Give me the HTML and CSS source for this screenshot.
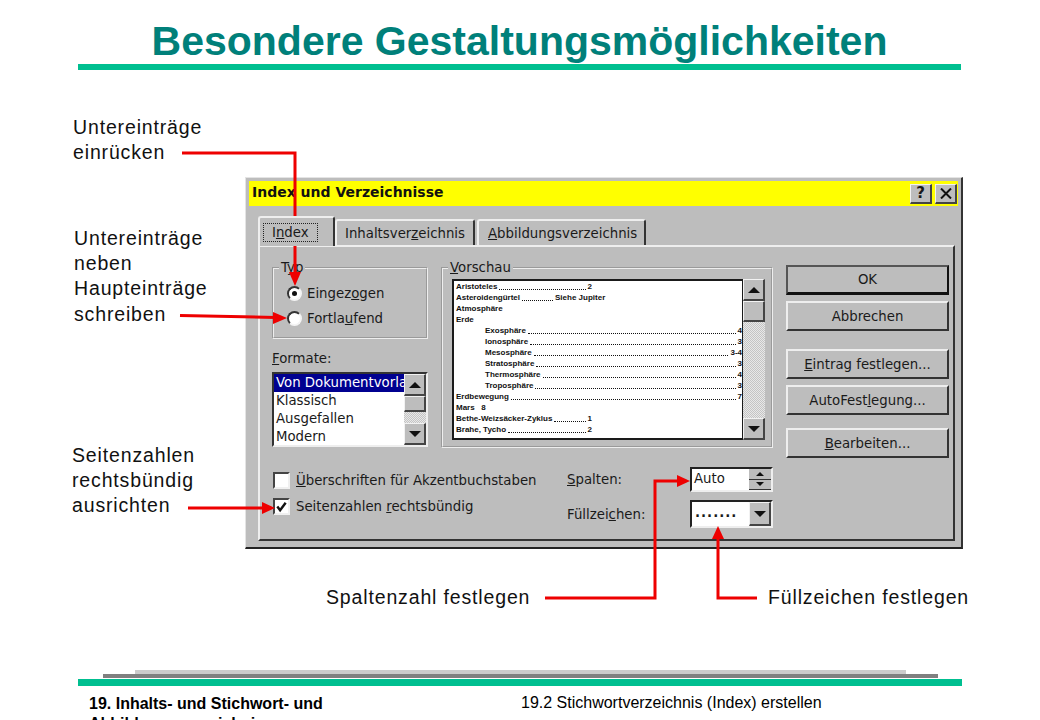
FILE: index.html
```html
<!DOCTYPE html>
<html>

<head>
    <title>Besondere Gestaltungsmöglichkeiten</title>

    <link rel="stylesheet" href="styles.css">
</head>

<body>
    <div class="slide">
        <h1 class="slide-title">Besondere Gestaltungsmöglichkeiten</h1>

        <div class="stage">
            <p class="note note-indent">Untereinträge<br>einrücken</p>
            <p class="note note-beside">Untereinträge<br>neben<br>Haupteinträge<br>schreiben</p>
            <p class="note note-right">Seitenzahlen<br>rechtsbündig<br>ausrichten</p>
            <p class="note note-cols">Spaltenzahl festlegen</p>
            <p class="note note-fill">Füllzeichen festlegen</p>

            <div class="dialog">
                <div class="titlebar">
                    <span class="titlebar-text">Index und Verzeichnisse</span>
                    <span class="title-btn">?</span>
                    <span class="title-btn title-close">
                        <svg width="12" height="11" viewBox="0 0 12 11"><path d="M1 0.5 L11 10.5 M11 0.5 L1 10.5" stroke="#111" stroke-width="2"/></svg>
                    </span>
                </div>

                <div class="tabs">
                    <div class="tab tab-active"><span class="focus">I<u>n</u>dex</span></div>
                    <div class="tab tab-second"><span>Inhaltsver<u>z</u>eichnis</span></div>
                    <div class="tab tab-last"><span><u>A</u>bbildungsverzeichnis</span></div>
                </div>

                <div class="panel">
                    <div class="left-col">
                        <fieldset class="group group-type">
                            <legend>T<u>y</u>p</legend>
                            <div class="radio-row"><span class="radio radio-on"></span><span>Eingez<u>o</u>gen</span></div>
                            <div class="radio-row"><span class="radio"></span><span>Fortla<u>u</u>fend</span></div>
                        </fieldset>
                        <div class="formats-label"><u>F</u>ormate:</div>
                        <div class="formats">
                            <div class="formats-items">
                                <div class="format-item format-selected">Von Dokumentvorla</div>
                                <div class="format-item">Klassisch</div>
                                <div class="format-item">Ausgefallen</div>
                                <div class="format-item">Modern</div>
                            </div>
                            <div class="scrollbar">
                                <span class="scroll-btn"><i class="tri-up"></i></span>
                                <span class="scroll-thumb scroll-thumb-small"></span>
                                <span class="scroll-track"></span>
                                <span class="scroll-btn"><i class="tri-down"></i></span>
                            </div>
                        </div>
                    </div>

                    <fieldset class="group group-preview">
                        <legend><u>V</u>orschau</legend>
                        <div class="preview">
                            <div class="preview-page">
                                <div class="entry"><span>Aristoteles</span><i></i><span>2</span><b class="entry-end"></b></div>
                                <div class="entry"><span>Asteroidengürtel</span><i class="short"></i><span>Siehe Jupiter</span><b class="entry-end"></b></div>
                                <div class="entry"><span>Atmosphäre</span></div>
                                <div class="entry"><span>Erde</span></div>
                                <div class="entry sub"><span>Exosphäre</span><i></i><span>4</span></div>
                                <div class="entry sub"><span>Ionosphäre</span><i></i><span>3</span></div>
                                <div class="entry sub"><span>Mesosphäre</span><i></i><span>3-4</span></div>
                                <div class="entry sub"><span>Stratosphäre</span><i></i><span>3</span></div>
                                <div class="entry sub"><span>Thermosphäre</span><i></i><span>4</span></div>
                                <div class="entry sub"><span>Troposphäre</span><i></i><span>3</span></div>
                                <div class="entry"><span>Erdbewegung</span><i></i><span>7</span></div>
                                <div class="entry"><span>Mars &nbsp; 8</span></div>
                                <div class="entry"><span>Bethe-Weizsäcker-Zyklus</span><i></i><span>1</span><b class="entry-end"></b></div>
                                <div class="entry"><span>Brahe, Tycho</span><i></i><span>2</span><b class="entry-end"></b></div>
                                <div class="entry"><span>Chinesische Sternbilder</span><i></i><span>4</span><b class="entry-end"></b></div>
                            </div>
                            <div class="scrollbar">
                                <span class="scroll-btn"><i class="tri-up"></i></span>
                                <span class="scroll-thumb"></span>
                                <span class="scroll-track"></span>
                                <span class="scroll-btn"><i class="tri-down"></i></span>
                            </div>
                        </div>
                    </fieldset>

                    <div class="buttons">
                        <div class="btn btn-default"><span>OK</span></div>
                        <div class="btn"><span>Abbrechen</span></div>
                        <div class="btn btn-gap"><span><u>E</u>intrag festlegen...</span></div>
                        <div class="btn"><span>AutoFest<u>l</u>egung...</span></div>
                        <div class="btn btn-gap-small"><span><u>B</u>earbeiten...</span></div>
                    </div>

                    <div class="options">
                        <div class="checks">
                            <div class="check-row"><span class="check"></span><span class="check-text"><u>Ü</u>berschriften für Akzentbuchstaben</span></div>
                            <div class="check-row">
                                <span class="check">
                                    <svg width="14" height="14" viewBox="0 0 14 14"><path d="M2.5 6.5 L5.5 10.5 L11.5 2.5" fill="none" stroke="#111" stroke-width="2.6"/></svg>
                                </span>
                                <span class="check-text">Seitenzahlen <u>r</u>echtsbündig</span>
                            </div>
                        </div>
                        <div class="fields">
                            <div class="field-row">
                                <span class="field-label"><u>S</u>palten:</span>
                                <div class="spin">
                                    <span class="spin-value">Auto</span>
                                    <span class="spin-btns">
                                        <span class="spin-btn"><i class="tri-up tri-small"></i></span>
                                        <span class="spin-btn"><i class="tri-down tri-small"></i></span>
                                    </span>
                                </div>
                            </div>
                            <div class="field-row">
                                <span class="field-label">Füllzei<u>c</u>hen:</span>
                                <div class="combo">
                                    <span class="combo-value">.......</span>
                                    <span class="combo-btn"><i class="tri-down"></i></span>
                                </div>
                            </div>
                        </div>
                    </div>
                </div>
            </div>
        </div>

        <div class="slide-footer">
            <div class="rule-light"></div>
            <div class="rule-dark"></div>
            <div class="rule-teal"></div>
            <div class="footer-text">
                <div class="chapter">19. Inhalts- und Stichwort- und<br>Abbildungsverzeichnis</div>
                <div class="section">19.2 Stichwortverzeichnis (Index) erstellen</div>
            </div>
        </div>

        <!-- red callout arrows -->
        <svg class="arrows" width="1040" height="720" viewBox="0 0 1040 720">
            <g fill="none" stroke="#ee0000" stroke-width="3">
                <path d="M182 153 H295 V274"/>
                <path d="M180 315.5 L276 317.5"/>
                <path d="M188 508 H265"/>
                <path d="M545 598 H655 V481 H680"/>
                <path d="M757 598 H718 V536"/>
            </g>
            <g fill="#ee0000">
                <path d="M295 286 L289 272 H301 Z"/>
                <path d="M287 318 L273 312 V324 Z"/>
                <path d="M275 508 L262 502 V514 Z"/>
                <path d="M690 481 L677 475 V487 Z"/>
                <path d="M718 526 L712 539 H724 Z"/>
            </g>
        </svg>
    </div>
</body>

</html>
```

FILE: styles.css
```css
* {
    box-sizing: border-box;
}

body {
    margin: 0;
    background-color: #ffffff;
    color: #000000;
    font-family: "Liberation Sans", Arial, sans-serif;
}

.slide {
    position: relative;
    display: flex;
    flex-direction: column;
    width: 1040px;
    height: 720px;
    overflow: hidden;
}

.slide-title {
    height: 70px;
    margin: 0 79px 0 78px;
    padding-top: 18px;
    border-bottom: 6px solid #00bf90;
    color: #00807a;
    font-size: 41px;
    line-height: 46px;
    font-weight: bold;
    text-align: center;
}

.stage {
    position: relative;
    flex: none;
    height: 600px;
}

.arrows {
    position: absolute;
    left: 0;
    top: 0;
}

/* callout labels */
.note {
    position: absolute;
    margin: 0;
    font-size: 19.5px;
    line-height: 25.2px;
    letter-spacing: 0.85px;
    white-space: nowrap;
    color: #111111;
}

.note-indent { left: 73px; top: 45px; }
.note-beside { left: 74px; top: 156px; }
.note-right { left: 72px; top: 373px; }
.note-cols { left: 326px; top: 515px; }
.note-fill { left: 768px; top: 515px; }

/* the dialog window */
.dialog {
    position: absolute;
    left: 245px;
    top: 107px;
    width: 718px;
    height: 372px;
    padding: 3px 3px 0 3px;
    border-top: 1px solid #e4e4e4;
    border-left: 1px solid #e4e4e4;
    border-right: 2px solid #333333;
    border-bottom: 2px solid #222222;
    background-color: #bdbdbd;
    font-family: "DejaVu Sans", sans-serif;
    font-size: 13.3px;
    color: #1a1a1a;
}

.titlebar {
    display: flex;
    align-items: center;
    gap: 3px;
    height: 25px;
    padding: 0 1px 0 3px;
    background-color: #ffff00;
}

.titlebar-text {
    flex: 1;
    padding-bottom: 3px;
    font-size: 14px;
    font-weight: bold;
    color: #111111;
}

.title-btn {
    display: flex;
    align-items: center;
    justify-content: center;
    width: 22px;
    height: 20px;
    border-top: 1px solid #f2f2f2;
    border-left: 1px solid #f2f2f2;
    border-right: 2px solid #444444;
    border-bottom: 2px solid #444444;
    background-color: #bdbdbd;
    font-weight: bold;
    font-size: 15px;
}

.tabs {
    display: flex;
    align-items: flex-end;
    height: 39px;
    padding-left: 9px;
}

.tab {
    display: flex;
    align-items: center;
    height: 26px;
    padding-left: 8px;
    border-top: 2px solid #eeeeee;
    border-left: 2px solid #eeeeee;
    border-right: 2px solid #333333;
    border-radius: 3px 3px 0 0;
}

.tab-active {
    position: relative;
    z-index: 1;
    width: 77px;
    height: 30px;
    margin-bottom: -1px;
    padding: 1px 0 0 3px;
    background-color: #bdbdbd;
}

.tab-second {
    width: 140px;
}

.tab-last {
    width: 169px;
    margin-left: 2px;
    padding-left: 9px;
}

.focus {
    padding: 1px 8px;
    border: 1px dotted #222222;
}

.panel {
    display: grid;
    grid-template-columns: 156px 332px 163px;
    grid-template-rows: 199px auto;
    column-gap: 13px;
    height: 296px;
    margin: 0 3px 0 9px;
    padding: 12px 0 0 12px;
    border-top: 2px solid #eeeeee;
    border-left: 2px solid #eeeeee;
    border-right: 2px solid #333333;
    border-bottom: 2px solid #333333;
}

.group {
    margin: 0;
    padding: 0;
    min-width: 0;
    border: 2px groove #eeeeee;
}

.group legend {
    margin-left: 5px;
    padding: 0 2px;
    line-height: 17px;
}

.left-col {
    display: flex;
    flex-direction: column;
}

.group-type {
    height: 80px;
    padding-top: 5px;
}

.radio-row {
    display: flex;
    align-items: center;
    gap: 5px;
    height: 25px;
    margin-left: 13px;
}

.radio {
    display: flex;
    align-items: center;
    justify-content: center;
    width: 15px;
    height: 15px;
    border-radius: 50%;
    border: 2px solid;
    border-color: #333333 #f4f4f4 #f4f4f4 #333333;
    background-color: #ffffff;
}

.radio-on::after {
    content: "";
    width: 5px;
    height: 5px;
    border-radius: 50%;
    background-color: #111111;
}

.formats-label {
    margin-top: 11px;
    line-height: 17px;
}

.formats {
    display: flex;
    height: 75px;
    margin-top: 5px;
    border: 2px solid;
    border-color: #333333 #eeeeee #eeeeee #333333;
    background-color: #ffffff;
}

.formats-items {
    flex: 1;
    min-width: 0;
    overflow: hidden;
}

.format-item {
    height: 18px;
    padding-left: 2px;
    line-height: 18px;
    white-space: nowrap;
}

.format-selected {
    background-color: #000090;
    color: #ffffff;
}

.scrollbar {
    flex: none;
    display: flex;
    flex-direction: column;
    width: 22px;
}

.scroll-btn {
    flex: none;
    display: flex;
    align-items: center;
    justify-content: center;
    height: 22px;
    border-top: 1px solid #f2f2f2;
    border-left: 1px solid #f2f2f2;
    border-right: 2px solid #444444;
    border-bottom: 2px solid #444444;
    background-color: #bdbdbd;
}

.scroll-thumb {
    flex: none;
    height: 21px;
    border-top: 1px solid #f2f2f2;
    border-left: 1px solid #f2f2f2;
    border-right: 2px solid #444444;
    border-bottom: 2px solid #444444;
    background-color: #bdbdbd;
}

.scroll-thumb-small {
    height: 16px;
}

/* dithered track, as on old windows */
.scroll-track {
    flex: 1;
    background: repeating-conic-gradient(#c4c4c4 0 25%, #e8e8e8 0 50%) 0 0 / 2px 2px;
}

.tri-up,
.tri-down {
    display: block;
    width: 0;
    height: 0;
    border-left: 6px solid transparent;
    border-right: 6px solid transparent;
}

.tri-up {
    border-bottom: 6px solid #111111;
}

.tri-down {
    border-top: 6px solid #111111;
}

.tri-small {
    border-left-width: 4px;
    border-right-width: 4px;
    border-top-width: 4px;
    border-bottom-width: 4px;
}

.tri-small.tri-up { border-top: 0; }
.tri-small.tri-down { border-bottom: 0; }

.group-preview {
    height: 189px;
    padding-top: 3px;
}

.preview {
    display: flex;
    height: 161px;
    margin: 0 6px 0 9px;
}

.preview-page {
    flex: 1;
    min-width: 0;
    padding-left: 2px;
    overflow: hidden;
    border: 2px solid #1a1a1a;
    border-right-width: 1px;
    background-color: #ffffff;
}

.entry {
    display: flex;
    align-items: flex-end;
    gap: 2px;
    height: 11px;
    font-family: "Liberation Sans", sans-serif;
    font-size: 8px;
    line-height: 11px;
    font-weight: bold;
    color: #111111;
    white-space: nowrap;
}

.entry i {
    flex: 1;
    margin-bottom: 2px;
    border-bottom: 1px dotted #111111;
}

.entry i.short {
    flex: none;
    width: 31px;
}

/* top-level entries stop about halfway across the page */
.entry-end {
    flex: none;
    width: 148px;
}

.sub {
    padding-left: 29px;
}

.buttons {
    grid-row: 1 / span 2;
    grid-column: 3;
    display: flex;
    flex-direction: column;
    gap: 6px;
    padding-top: 6px;
}

.btn {
    display: flex;
    align-items: center;
    justify-content: center;
    height: 30px;
    border-top: 2px solid #eeeeee;
    border-left: 2px solid #eeeeee;
    border-right: 2px solid #333333;
    border-bottom: 2px solid #333333;
    background-color: #bdbdbd;
}

.btn-default {
    border-top-color: #555555;
    border-left-color: #555555;
    border-right-color: #111111;
    border-bottom: 3px solid #111111;
}

.btn-gap {
    margin-top: 12px;
}

.btn-gap-small {
    margin-top: 7px;
}

.options {
    grid-column: 1 / span 2;
    display: flex;
    justify-content: space-between;
}

.checks {
    display: flex;
    flex-direction: column;
    gap: 9px;
    padding: 14px 0 0 1px;
}

.check-row {
    display: flex;
    align-items: center;
    gap: 6px;
    height: 17px;
}

.check {
    display: flex;
    align-items: center;
    justify-content: center;
    width: 17px;
    height: 17px;
    border: 2px solid;
    border-color: #444444 #f0f0f0 #f0f0f0 #444444;
    background-color: #ffffff;
}

.fields {
    display: flex;
    flex-direction: column;
    gap: 8px;
    padding-top: 9px;
}

.field-row {
    display: flex;
    align-items: center;
    width: 206px;
}

.field-label {
    flex: none;
    width: 123px;
}

.spin,
.combo {
    display: flex;
    width: 83px;
    border: 2px solid;
    border-color: #222222 #eeeeee #eeeeee #222222;
    background-color: #ffffff;
}

.spin {
    height: 25px;
}

.combo {
    height: 28px;
}

.spin-value {
    flex: 1;
    padding: 2px 0 0 2px;
}

.spin-btns {
    display: flex;
    flex-direction: column;
    width: 22px;
}

.spin-btn {
    flex: 1;
    display: flex;
    align-items: center;
    justify-content: center;
    background-color: #bdbdbd;
    border-bottom: 1px solid #333333;
}

.combo-value {
    flex: 1;
    padding: 3px 0 0 3px;
    font-weight: bold;
    letter-spacing: 1px;
}

.combo-btn {
    display: flex;
    align-items: center;
    justify-content: center;
    width: 22px;
    border-top: 1px solid #f2f2f2;
    border-left: 1px solid #f2f2f2;
    border-right: 2px solid #444444;
    border-bottom: 2px solid #444444;
    background-color: #bdbdbd;
}

/* footer */
.slide-footer {
    display: flex;
    flex-direction: column;
}

.rule-light {
    height: 4px;
    margin: 0 134px 0 135px;
    background-color: #cccccc;
}

.rule-dark {
    height: 4px;
    margin: 0 102px 0 103px;
    background-color: #808080;
}

.rule-teal {
    height: 7px;
    margin: 1px 78px 0 78px;
    background-color: #00bf90;
}

.footer-text {
    display: flex;
    padding: 7px 0 0 89px;
    font-size: 16px;
    line-height: 20px;
}

.chapter {
    width: 432px;
    padding-top: 1px;
    font-weight: bold;
}
```
